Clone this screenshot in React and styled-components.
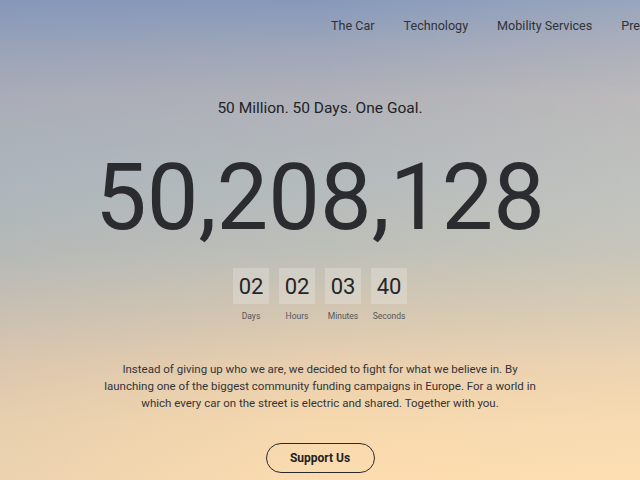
import React from 'react';
import styled, { createGlobalStyle } from 'styled-components';

const Global = createGlobalStyle`
  html, body {
    margin: 0;
    padding: 0;
    width: 640px;
    height: 480px;
    overflow: hidden;
  }
  body {
    font-family: Roboto, "Liberation Sans", sans-serif;
    color: #2b2c30;
  }
`;

const Page = styled.div`
  position: relative;
  width: 640px;
  height: 480px;
  overflow: hidden;
  background:
    linear-gradient(90deg, rgba(120,140,180,0.12) 0%, rgba(255,255,255,0) 50%, rgba(255,235,200,0.15) 100%),
    linear-gradient(180deg,
      #8699bb 0%,
      #9ea6b9 10%,
      #b0b1b8 20%,
      #b4bbbd 38%,
      #bdbfb8 52%,
      #d2c6b2 64%,
      #e9cfae 76%,
      #f6d8ad 88%,
      #fcdcaf 100%);
  display: flex;
  flex-direction: column;
  align-items: center;
`;

const Nav = styled.nav`
  align-self: stretch;
  display: flex;
  gap: 29px;
  padding: 18px 0 0 331px;
  height: 34px;
  box-sizing: border-box;
  white-space: nowrap;
  overflow: hidden;
`;

const NavLink = styled.a`
  font-size: 12.6px;
  line-height: 16px;
  color: #303236;
  text-decoration: none;
`;

const Tagline = styled.h2`
  margin: 65px 0 0;
  font-size: 15.5px;
  font-weight: 400;
  line-height: 18px;
  color: #222326;
`;

const Counter = styled.div`
  margin-top: 29px;
  font-size: 92px;
  line-height: 104px;
  font-weight: 400;
  color: #2b2c30;
`;

const Countdown = styled.div`
  display: flex;
  gap: 10px;
  margin-top: 18px;
`;

const Unit = styled.div`
  display: flex;
  flex-direction: column;
  align-items: center;
  gap: 7px;
`;

const Box = styled.div`
  width: 36px;
  height: 36px;
  display: flex;
  align-items: center;
  justify-content: center;
  background: rgba(255, 255, 255, 0.22);
  font-size: 22px;
  color: #25262a;
`;

const Label = styled.span`
  font-size: 8.5px;
  line-height: 10px;
  color: #55565a;
`;

const Text = styled.p`
  margin: 40px 0 0;
  width: 440px;
  text-align: center;
  font-size: 11.5px;
  line-height: 17px;
  color: #333438;
`;

const Button = styled.button`
  margin-top: 31px;
  width: 109px;
  height: 30px;
  border: 1px solid #2a2a2c;
  border-radius: 15px;
  background: transparent;
  font-family: Roboto, "Liberation Sans", sans-serif;
  font-size: 12px;
  font-weight: 700;
  color: #222;
`;

const units = [
  ['02', 'Days'],
  ['02', 'Hours'],
  ['03', 'Minutes'],
  ['40', 'Seconds'],
];

export default function App() {
  return (
    <Page>
      <Global />
      <Nav>
        <NavLink>The Car</NavLink>
        <NavLink>Technology</NavLink>
        <NavLink>Mobility Services</NavLink>
        <NavLink>Press</NavLink>
      </Nav>
      <Tagline>50 Million. 50 Days. One Goal.</Tagline>
      <Counter>50,208,128</Counter>
      <Countdown>
        {units.map(([v, l]) => (
          <Unit key={l}>
            <Box>{v}</Box>
            <Label>{l}</Label>
          </Unit>
        ))}
      </Countdown>
      <Text>
        Instead of giving up who we are, we decided to fight for what we believe in. By
        launching one of the biggest community funding campaigns in Europe. For a world in
        which every car on the street is electric and shared. Together with you.
      </Text>
      <Button>Support Us</Button>
    </Page>
  );
}
